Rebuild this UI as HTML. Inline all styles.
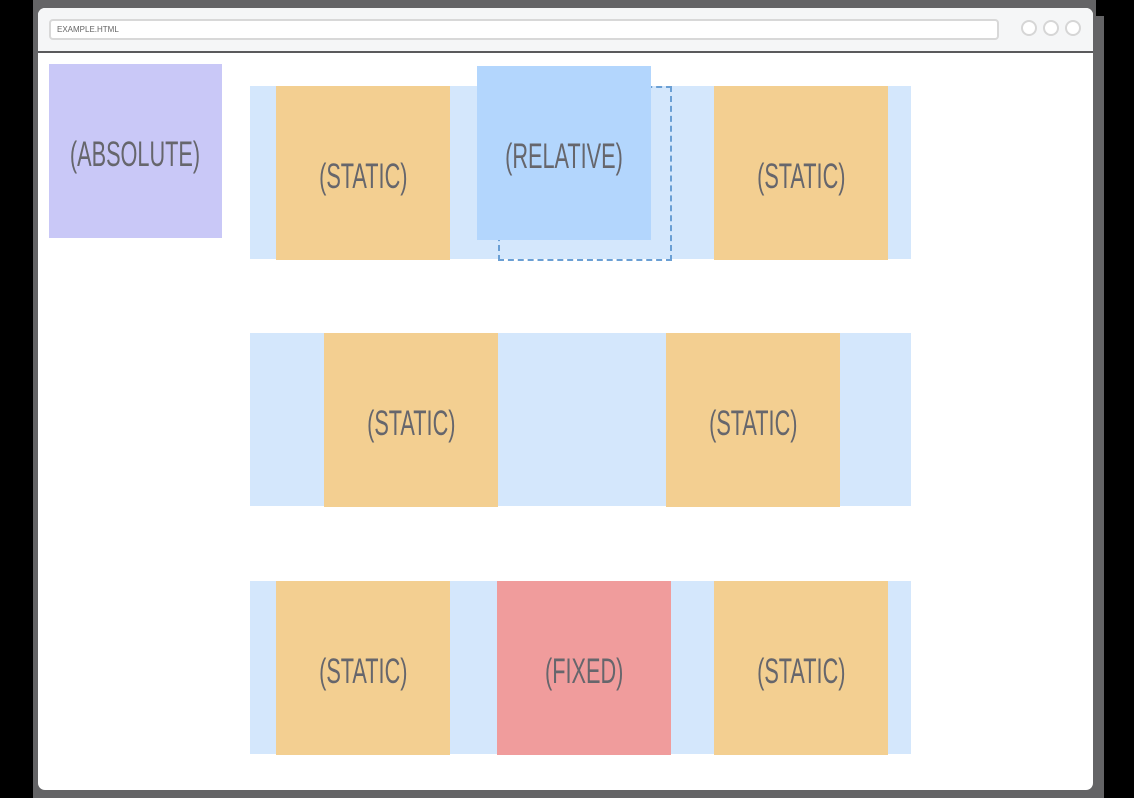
<!DOCTYPE html>
<html><head><style>
html,body{margin:0;padding:0;width:1134px;height:798px;background:#000;overflow:hidden;position:relative;font-family:"Liberation Sans",sans-serif}
.a{position:absolute}
.frame{left:33px;top:0;width:1071px;height:798px;background:#646466}
.cut{left:1096px;top:0;width:8px;height:16px;background:#000}
.win{left:38px;top:8px;width:1055px;height:782px;background:#fff;border-radius:7px;overflow:hidden}
.head{left:0;top:0;width:1055px;height:43px;background:#f5f6f7;border-bottom:2px solid #5a5a5c}
.url{left:11px;top:11px;width:940px;height:17px;border:2px solid #d8d8d8;border-radius:4px;background:#fff;font-size:8px;color:#666;line-height:17px;padding-left:6px}
.c{top:12px;width:12px;height:12px;border:2px solid #d6d6d6;border-radius:50%;background:#fff}
.row{background:#d4e7fc;height:173px}
.bx{display:flex;align-items:center;justify-content:center;color:#66666c;font-size:35px;height:174px;width:174px;padding-top:8px;box-sizing:border-box}
.bx span{display:inline-block;transform:scaleX(0.62);white-space:nowrap}
.s{background:#f3cf91}
</style></head><body>
<div class="a frame"></div><div class="a cut"></div>
<div class="a win">
 <div class="a head">
  <div class="a url">EXAMPLE.HTML</div>
  <div class="a c" style="left:983px"></div><div class="a c" style="left:1005px"></div><div class="a c" style="left:1027px"></div>
 </div>
</div>
<div class="a bx" style="left:49px;top:64px;width:173px;background:#c9c8f7"><span>(ABSOLUTE)</span></div>

<div class="a row" style="left:250px;top:86px;width:661px"></div>
<div class="a bx s" style="left:276px;top:86px"><span>(STATIC)</span></div>
<div class="a bx s" style="left:714px;top:86px"><span>(STATIC)</span></div>
<div class="a" style="left:498px;top:86px;width:170px;height:171px;border:2px dashed #6a9fd4"></div>
<div class="a bx" style="left:477px;top:66px;background:#b3d6fd"><span>(RELATIVE)</span></div>

<div class="a row" style="left:250px;top:333px;width:661px"></div>
<div class="a bx s" style="left:324px;top:333px"><span>(STATIC)</span></div>
<div class="a bx s" style="left:666px;top:333px"><span>(STATIC)</span></div>

<div class="a row" style="left:250px;top:581px;width:661px"></div>
<div class="a bx s" style="left:276px;top:581px"><span>(STATIC)</span></div>
<div class="a bx" style="left:497px;top:581px;background:#f09c9c"><span>(FIXED)</span></div>
<div class="a bx s" style="left:714px;top:581px"><span>(STATIC)</span></div>
</body></html>
